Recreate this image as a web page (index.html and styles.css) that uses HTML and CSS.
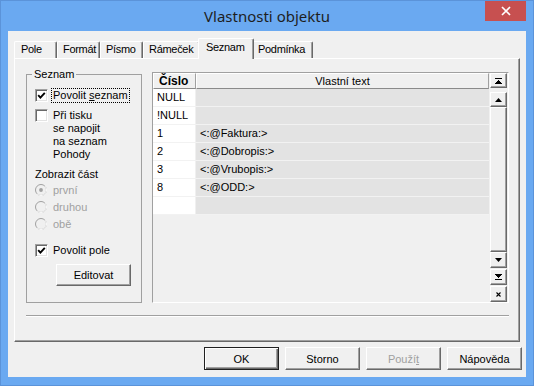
FILE: index.html
```html
<!DOCTYPE html>
<html lang="cs">
<head>
<meta charset="utf-8">
<title>Vlastnosti objektu</title>
<link rel="stylesheet" href="styles.css">
</head>
<body>
<div class="window">
  <div class="titlebar">
    <div></div>
    <div class="title">Vlastnosti objektu</div>
    <div class="tb-right">
      <div class="close"><svg width="10" height="10" viewBox="0 0 10 10"><path d="M1 1L9 9M9 1L1 9" stroke="#fff" stroke-width="1.7" fill="none"/></svg></div>
    </div>
  </div>
  <div class="client">
    <div class="tabs">
      <div class="tab t-pole">Pole</div>
      <div class="tab t-format">Formát</div>
      <div class="tab t-pismo">Písmo</div>
      <div class="tab t-ramecek">Rámeček</div>
      <div class="tab t-seznam active">Seznam</div>
      <div class="tab t-podminka">Podmínka</div>
    </div>
    <div class="panel">
      <div class="panel-main">
        <fieldset class="group">
          <legend>Seznam</legend>
          <div class="opt opt-first">
            <span class="chk"><svg width="9" height="9" viewBox="0 0 9 9"><path d="M1.2 4.2L3.4 6.6L7.8 1.8" stroke="#000" stroke-width="1.9" fill="none"/></svg></span>
            <span class="focus">Povolit <u>s</u>eznam</span>
          </div>
          <div class="opt opt-multi">
            <span class="chk"></span>
            <span class="lbl">Při tisku<br>se napojit<br>na seznam<br>Pohody</span>
          </div>
          <div class="caption">Zobrazit část</div>
          <div class="radios">
            <div class="radio-row">
              <svg class="radio" width="12" height="12" viewBox="0 0 12 12"><circle cx="6" cy="6" r="5.5" fill="#f0f0f0" stroke="#a0a0a0"/><path d="M9.9 2.1A5.5 5.5 0 0 1 2.1 9.9" stroke="#fff" fill="none"/><circle cx="6" cy="6" r="1.9" fill="#a0a0a0"/></svg>
              <span class="dis">první</span>
            </div>
            <div class="radio-row">
              <svg class="radio" width="12" height="12" viewBox="0 0 12 12"><circle cx="6" cy="6" r="5.5" fill="#f0f0f0" stroke="#a0a0a0"/><path d="M9.9 2.1A5.5 5.5 0 0 1 2.1 9.9" stroke="#fff" fill="none"/></svg>
              <span class="dis">druhou</span>
            </div>
            <div class="radio-row">
              <svg class="radio" width="12" height="12" viewBox="0 0 12 12"><circle cx="6" cy="6" r="5.5" fill="#f0f0f0" stroke="#a0a0a0"/><path d="M9.9 2.1A5.5 5.5 0 0 1 2.1 9.9" stroke="#fff" fill="none"/></svg>
              <span class="dis">obě</span>
            </div>
          </div>
          <div class="opt opt-pole">
            <span class="chk"><svg width="9" height="9" viewBox="0 0 9 9"><path d="M1.2 4.2L3.4 6.6L7.8 1.8" stroke="#000" stroke-width="1.9" fill="none"/></svg></span>
            <span class="lbl">Povolit pole</span>
          </div>
          <button class="btn btn-edit">Editovat</button>
        </fieldset>
        <div class="gridctl">
          <div class="table">
            <div class="thead">
              <div class="th th-num">Číslo</div>
              <div class="th th-text">Vlastní text</div>
            </div>
            <div class="tr"><div class="td num">NULL</div><div class="td txt"></div></div>
            <div class="tr"><div class="td num">!NULL</div><div class="td txt"></div></div>
            <div class="tr"><div class="td num">1</div><div class="td txt">&lt;:@Faktura:&gt;</div></div>
            <div class="tr"><div class="td num">2</div><div class="td txt">&lt;:@Dobropis:&gt;</div></div>
            <div class="tr"><div class="td num">3</div><div class="td txt">&lt;:@Vrubopis:&gt;</div></div>
            <div class="tr"><div class="td num">8</div><div class="td txt">&lt;:@ODD:&gt;</div></div>
            <div class="tr"><div class="td num"></div><div class="td txt"></div></div>
          </div>
          <div class="nav">
            <div class="nb nb-first"><svg width="7" height="6" viewBox="0 0 7 6" shape-rendering="crispEdges"><rect x="0" y="0" width="7" height="1"/><path d="M3.5 1.5L7 5.5H0Z"/></svg></div>
            <div class="nb nb-up"><svg width="7" height="4" viewBox="0 0 7 4"><path d="M3.5 0L7 4H0Z"/></svg></div>
            <div class="nb nb-track"></div>
            <div class="nb nb-down"><svg width="7" height="4" viewBox="0 0 7 4"><path d="M0 0H7L3.5 4Z"/></svg></div>
            <div class="nb nb-last"><svg width="7" height="6" viewBox="0 0 7 6" shape-rendering="crispEdges"><path d="M0 0H7L3.5 4Z"/><rect x="0" y="5" width="7" height="1"/></svg></div>
            <div class="nb nb-x"><svg width="5" height="5" viewBox="0 0 5 5"><path d="M0.5 0.5L4.5 4.5M4.5 0.5L0.5 4.5" stroke="#000" stroke-width="1.1"/></svg></div>
          </div>
        </div>
      </div>
      <div class="sep"></div>
    </div>
    <div class="buttons">
      <button class="btn btn-default">OK</button>
      <button class="btn">Storno</button>
      <button class="btn disabled">Použí<u>t</u></button>
      <button class="btn">Nápověda</button>
    </div>
  </div>
</div>
</body>
</html>
```

FILE: styles.css
```css
* { box-sizing: border-box; }
html, body { margin: 0; padding: 0; }
body {
  width: 534px;
  height: 386px;
  overflow: hidden;
  background: #6aa9f1;
  font-family: "Liberation Sans", Arial, sans-serif;
  font-size: 11px;
  color: #000;
}
.window {
  width: 534px;
  height: 386px;
  background: #6aa9f1;
  border: 1px solid #5b93d9;
  display: flex;
  flex-direction: column;
}
.titlebar {
  height: 30px;
  flex: none;
  display: grid;
  grid-template-columns: 1fr auto 1fr;
}
.title {
  font-family: "Noto Sans", "Open Sans", sans-serif;
  font-size: 15px;
  line-height: 18px;
  padding-top: 6px;
  color: #1e1e1e;
  white-space: nowrap;
}
.tb-right {
  display: flex;
  justify-content: flex-end;
  padding-right: 7px;
}
.close {
  width: 41px;
  height: 20px;
  background: #c75050;
  display: flex;
  align-items: center;
  justify-content: center;
}
.client {
  flex: 1;
  margin: 0 7px 8px;
  background: #f0f0f0;
  display: flex;
  flex-direction: column;
}
/* tabs */
.tabs {
  margin-top: 7px;
  height: 20px;
  padding-left: 6px;
  display: flex;
  align-items: flex-end;
  position: relative;
  z-index: 2;
}
.tab {
  height: 17px;
  line-height: 15px;
  padding-left: 5px;
  letter-spacing: -0.3px;
  white-space: nowrap;
  overflow: hidden;
  background: #f0f0f0;
  border-top: 1px solid #fff;
  border-left: 1px solid #fff;
  border-right: 1px solid #696969;
  box-shadow: inset -1px 0 0 #a0a0a0;
  border-radius: 2px 2px 0 0;
}
.t-pole { width: 43px; padding-left: 6px; }
.t-format { width: 43px; }
.t-pismo { width: 43px; }
.t-ramecek { width: 57px; }
.t-seznam { width: 52px; }
.t-podminka { width: 61px; }
.tab.active {
  width: 56px;
  height: 21px;
  margin: 0 -2px -1px;
  padding-left: 7px;
  line-height: 17px;
  position: relative;
  z-index: 3;
}
/* panel */
.panel {
  margin: 0 6px;
  height: 284px;
  border-top: 1px solid #fff;
  border-left: 1px solid #fff;
  border-right: 1px solid #696969;
  border-bottom: 1px solid #696969;
  box-shadow: inset -1px -1px 0 #a0a0a0;
  padding: 9px 0 0 11px;
}
.panel-main {
  display: grid;
  grid-template-columns: 116px 357px;
  column-gap: 10px;
  align-items: start;
}
.group {
  margin: 0;
  padding: 0 0 0 8px;
  border: 1px solid #a0a0a0;
  height: 235px;
  min-width: 0;
}
.group legend {
  margin-left: -3px;
  padding: 0 2px;
  line-height: 13px;
}
.opt {
  display: flex;
  align-items: center;
}
.chk {
  flex: none;
  width: 13px;
  height: 13px;
  background: #fff;
  border: 1px solid;
  border-color: #a0a0a0 #fff #fff #a0a0a0;
  box-shadow: inset 1px 1px 0 #696969, inset -1px -1px 0 #e3e3e3;
  display: flex;
  align-items: center;
  justify-content: center;
}
.chk svg { display: block; }
.opt-first {
  margin-top: 7px;
  height: 15px;
}
.focus {
  margin-left: 3px;
  border: 1px dotted #000;
  padding: 0 1px;
  line-height: 13px;
}
.opt-multi {
  margin-top: 6px;
  align-items: flex-start;
}
.lbl {
  margin-left: 5px;
  line-height: 13px;
}
.caption {
  margin-top: 7px;
  line-height: 13px;
}
.radios {
  margin-top: 1px;
  display: flex;
  flex-direction: column;
  gap: 1px;
}
.radio-row {
  height: 16px;
  display: flex;
  align-items: center;
}
.radio { display: block; flex: none; }
.dis {
  margin-left: 6px;
  color: #a0a0a0;
}
.opt-pole {
  margin-top: 11px;
  height: 15px;
}
.btn {
  font-family: "Liberation Sans", Arial, sans-serif;
  font-size: 11px;
  color: #000;
  background: #f0f0f0;
  width: 75px;
  height: 23px;
  padding: 0;
  border: 1px solid;
  border-color: #fff #696969 #696969 #fff;
  box-shadow: inset -1px -1px 0 #a0a0a0;
  border-radius: 0;
}
.btn-edit {
  display: block;
  margin: 6px 0 0 21px;
  height: 22px;
}
/* grid */
.gridctl {
  margin-top: 4px;
  height: 231px;
  border: 1px solid;
  border-color: #a0a0a0 #fff #fff #a0a0a0;
  display: flex;
}
.table {
  width: 336px;
  display: flex;
  flex-direction: column;
}
.thead {
  display: flex;
  height: 16px;
}
.th {
  border-top: 1px solid #fff;
  border-left: 1px solid #fff;
  border-right: 1px solid #a0a0a0;
  border-bottom: 1px solid #8a8a8a;
  line-height: 14px;
}
.th-num {
  width: 43px;
  font-weight: bold;
  font-size: 12px;
  padding-left: 5px;
}
.th-text {
  flex: 1;
  text-align: center;
}
.tr {
  display: flex;
  height: 18px;
}
.td {
  border-bottom: 1px solid #f2f2f2;
  line-height: 17px;
  white-space: nowrap;
}
.num {
  width: 43px;
  background: #fff;
  padding-left: 4px;
  border-right: 1px solid #f0f0f0;
}
.txt {
  flex: 1;
  background: #e3e3e3;
  padding-left: 4px;
}
.nav {
  width: 17px;
  margin-left: 1px;
  display: flex;
  flex-direction: column;
}
.nb {
  background: #f0f0f0;
  border: 1px solid;
  border-color: #fff #696969 #696969 #fff;
  box-shadow: inset -1px -1px 0 #a0a0a0;
  display: flex;
  align-items: center;
  justify-content: center;
}
.nb svg { display: block; }
.nb-first { height: 15px; margin-bottom: 4px; }
.nb-up { height: 15px; }
.nb-track { height: 145px; }
.nb-down { height: 16px; margin-bottom: 1px; }
.nb-last { height: 16px; margin-bottom: 1px; }
.nb-x { height: 16px; }
.sep {
  margin-top: 12px;
  width: 483px;
  height: 2px;
  border-top: 1px solid #a0a0a0;
  border-bottom: 1px solid #fff;
}
/* bottom buttons */
.buttons {
  margin-top: 5px;
  padding-right: 4px;
  display: flex;
  justify-content: flex-end;
  gap: 6px;
}
.btn-default {
  border: 1px solid #202020;
  box-shadow: inset 1px 1px 0 #fff, inset -1px -1px 0 #696969, inset -2px -2px 0 #a0a0a0;
}
.btn.disabled { color: #a0a0a0; }
```
